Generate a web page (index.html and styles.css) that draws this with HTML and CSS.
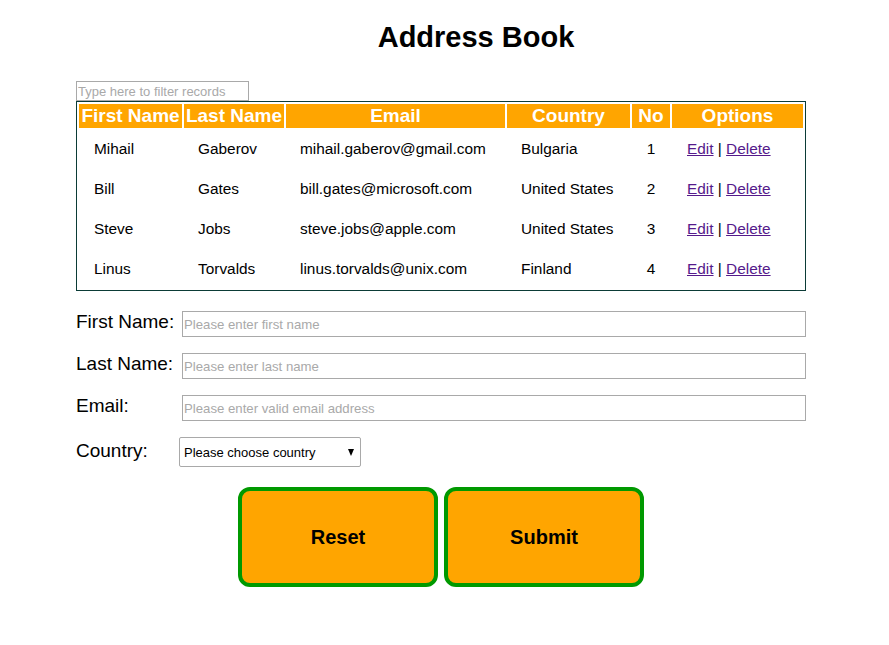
FILE: index.html
```html
<!DOCTYPE html>
<html>
<head>
<meta charset="utf-8">
<title>Address Book</title>
<link rel="stylesheet" href="styles.css">
</head>
<body>
<div class="page">
  <h1 class="title">Address Book</h1>
  <input class="filter" type="text" placeholder="Type here to filter records">
  <table class="records">
    <thead>
      <tr>
        <th class="c-first">First Name</th>
        <th class="c-last">Last Name</th>
        <th class="c-email">Email</th>
        <th class="c-country">Country</th>
        <th class="c-no">No</th>
        <th class="c-opt">Options</th>
      </tr>
    </thead>
    <tbody>
      <tr><td class="first">Mihail</td><td>Gaberov</td><td>mihail.gaberov@gmail.com</td><td>Bulgaria</td><td class="no">1</td><td class="opt"><a href="#">Edit</a> | <a href="#">Delete</a></td></tr>
      <tr><td class="first">Bill</td><td>Gates</td><td>bill.gates@microsoft.com</td><td>United States</td><td class="no">2</td><td class="opt"><a href="#">Edit</a> | <a href="#">Delete</a></td></tr>
      <tr><td class="first">Steve</td><td>Jobs</td><td>steve.jobs@apple.com</td><td>United States</td><td class="no">3</td><td class="opt"><a href="#">Edit</a> | <a href="#">Delete</a></td></tr>
      <tr><td class="first">Linus</td><td>Torvalds</td><td>linus.torvalds@unix.com</td><td>Finland</td><td class="no">4</td><td class="opt"><a href="#">Edit</a> | <a href="#">Delete</a></td></tr>
    </tbody>
  </table>
  <form class="form">
    <div class="row"><label class="lbl">First Name:</label><input class="field" type="text" placeholder="Please enter first name"></div>
    <div class="row"><label class="lbl">Last Name:</label><input class="field" type="text" placeholder="Please enter last name"></div>
    <div class="row"><label class="lbl">Email:</label><input class="field" type="text" placeholder="Please enter valid email address"></div>
    <div class="row row-country"><label class="lbl">Country:</label>
      <div class="select-wrap">
        <select class="select">
          <option>Please choose country</option>
          <option>Bulgaria</option>
          <option>United States</option>
          <option>Finland</option>
        </select>
      </div>
    </div>
    <div class="buttons">
      <button class="btn" type="reset">Reset</button>
      <button class="btn" type="button">Submit</button>
    </div>
  </form>
</div>
</body>
</html>
```
FILE: styles.css
```css
* { box-sizing: border-box; }
html, body { margin: 0; padding: 0; background: #fff; }
body { font-family: "Liberation Sans", Arial, sans-serif; color: #000; }

.page {
  width: 730px;
  margin-left: 76px;
  padding-top: 20px;
  display: flex;
  flex-direction: column;
}

.title {
  margin: 0;
  padding-left: 70px;
  text-align: center;
  font-size: 29px;
  font-weight: bold;
  line-height: 34px;
}

.filter {
  margin-top: 27px;
  width: 173px;
  height: 20px;
  border: 1px solid #a9a9a9;
  padding: 0 1px;
  font-family: "Liberation Sans", Arial, sans-serif;
  font-size: 13px;
  outline: none;
}
.filter::placeholder { color: #a9a9a9; }

.records {
  width: 730px;
  border: 1px solid #0b3b36;
  border-spacing: 2px;
  table-layout: fixed;
}
.records th {
  background: #ffa500;
  color: #fff;
  font-size: 19px;
  font-weight: bold;
  padding: 0;
  height: 24px;
  line-height: 22px;
  text-align: center;
  white-space: nowrap;
}
.c-first { width: 103px; }
.c-last { width: 100px; }
.c-email { width: 219px; }
.c-country { width: 123px; }
.c-no { width: 38px; }
.c-opt { width: 131px; }

.records td {
  font-size: 15.4px;
  line-height: 18px;
  padding: 10px 14px;
  height: 38px;
  white-space: nowrap;
}
.records td.first { padding-left: 15px; }
.records td.opt { padding-left: 15px; }
.records td.no { text-align: center; padding: 10px 0; }
.records a { color: #551a8b; }

.form {
  margin-top: 20px;
  display: flex;
  flex-direction: column;
  gap: 16px;
}
.row {
  display: flex;
  align-items: center;
  height: 26px;
}
.lbl {
  width: 106px;
  flex: none;
  font-size: 19px;
  line-height: 22px;
  margin-top: -4px;
}
.field {
  flex: 1;
  height: 26px;
  border: 1px solid #a9a9a9;
  padding: 0 1px;
  font-family: "Liberation Sans", Arial, sans-serif;
  font-size: 13.2px;
  outline: none;
}
.field::placeholder { color: #a9a9a9; }

.row-country { height: 30px; }
.row-country .lbl { width: 103px; margin-top: -3px; }
.select-wrap { position: relative; width: 182px; height: 30px; }
.select {
  appearance: none;
  -webkit-appearance: none;
  width: 182px;
  height: 30px;
  border: 1px solid #a9a9a9;
  border-radius: 2px;
  background: #fff;
  padding: 0 4px;
  font-family: "Liberation Sans", Arial, sans-serif;
  font-size: 13px;
  color: #000;
}
.select-wrap::after {
  content: "";
  position: absolute;
  right: 7px;
  top: 12px;
  border-left: 3.5px solid transparent;
  border-right: 3.5px solid transparent;
  border-top: 7px solid #000;
}

.buttons {
  margin-top: 4px;
  display: flex;
  justify-content: center;
  gap: 6px;
}
.btn {
  width: 200px;
  height: 100px;
  background: #ffa500;
  border: 4px solid #009900;
  border-radius: 12px;
  font-family: "Liberation Sans", Arial, sans-serif;
  font-size: 20px;
  font-weight: bold;
  color: #000;
  cursor: pointer;
}
```
